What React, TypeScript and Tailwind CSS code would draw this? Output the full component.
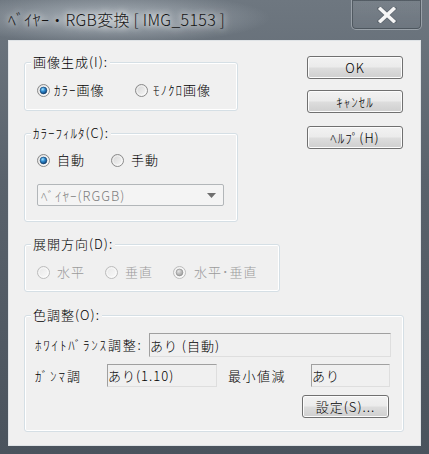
const FONT = "font-['Noto_Sans_CJK_JP','Noto_Sans',sans-serif]";

function Radio({ checked = false, disabled = false }: { checked?: boolean; disabled?: boolean }) {
  return (
    <svg width="13" height="13" viewBox="0 0 13 13" className="shrink-0">
      <defs>
        <linearGradient id="rbFill" x1="0" y1="0" x2="1" y2="1">
          <stop offset="0" stopColor="#d2d2d2" />
          <stop offset="1" stopColor="#fbfbfb" />
        </linearGradient>
        <linearGradient id="rbFillOff" x1="0" y1="0" x2="1" y2="1">
          <stop offset="0" stopColor="#e6e6e6" />
          <stop offset="1" stopColor="#fbfbfb" />
        </linearGradient>
        <radialGradient id="rbDot" cx="0.38" cy="0.32" r="0.7">
          <stop offset="0" stopColor="#a6e4ff" />
          <stop offset="0.45" stopColor="#2f8bd0" />
          <stop offset="1" stopColor="#0d3e74" />
        </radialGradient>
        <radialGradient id="rbDotOff" cx="0.38" cy="0.32" r="0.7">
          <stop offset="0" stopColor="#e4e4e4" />
          <stop offset="1" stopColor="#9c9c9c" />
        </radialGradient>
      </defs>
      <circle
        cx="6.5"
        cy="6.5"
        r="6"
        fill={disabled ? 'url(#rbFillOff)' : 'url(#rbFill)'}
        stroke={disabled ? '#bcbcbc' : '#8a8a8a'}
      />
      <circle cx="6.5" cy="6.5" r="4.6" fill="none" stroke="#ffffff" strokeOpacity="0.6" />
      {checked && (
        <circle
          cx="6.5"
          cy="6.5"
          r="3.4"
          fill={disabled ? 'url(#rbDotOff)' : 'url(#rbDot)'}
          stroke={disabled ? '#8c8c8c' : '#163f6c'}
          strokeWidth="0.6"
        />
      )}
    </svg>
  );
}

function Option({
  label,
  checked,
  disabled,
  width,
  gap,
}: {
  label: string;
  checked?: boolean;
  disabled?: boolean;
  width: string;
  gap: string;
}) {
  return (
    <div className={`flex h-[16px] shrink-0 items-center whitespace-nowrap ${width} ${gap}`}>
      <Radio checked={checked} disabled={disabled} />
      <span className={disabled ? 'text-[#9b9b9b]' : 'text-black'}>{label}</span>
    </div>
  );
}

function Group({
  label,
  className,
  children,
}: {
  label: string;
  className: string;
  children: React.ReactNode;
}) {
  return (
    <div
      className={`relative rounded-[3px] border border-[#d5dfe5] shadow-[inset_0_0_0_1px_#ffffff] ${className}`}
    >
      <span className="absolute -top-[9px] left-[6px] whitespace-nowrap bg-[#f0f0f0] px-[2px] leading-[16px]">
        {label}
      </span>
      {children}
    </div>
  );
}

function Button({ label, className }: { label: string; className: string }) {
  return (
    <button
      className={`flex h-[23px] items-center justify-center whitespace-nowrap rounded-[3px] border border-[#707070] bg-[linear-gradient(#f2f2f2_0%,#ebebeb_48%,#dddddd_52%,#cfcfcf_100%)] shadow-[inset_0_0_0_1px_#fcfcfc] leading-none text-black ${className}`}
    >
      {label}
    </button>
  );
}

function Field({ value, className }: { value: string; className: string }) {
  return (
    <div
      className={`flex shrink-0 items-center whitespace-nowrap border border-t-[#a0a0a0] border-l-[#a0a0a0] border-r-[#dedede] border-b-[#dedede] bg-[#f0f0f0] leading-none ${className}`}
    >
      {value}
    </div>
  );
}

export default function App() {
  return (
    <div
      className={`flex h-[454px] w-[429px] flex-col overflow-hidden bg-[linear-gradient(180deg,#6e7780_0%,#59626c_40%,#4a535d_100%)] text-[13px] font-light tracking-[1px] ${FONT}`}
    >
      {/* title bar */}
      <div className="relative flex h-[40px] shrink-0 items-start bg-[radial-gradient(ellipse_160px_26px_at_110px_18px,rgba(190,198,205,0.75),rgba(190,198,205,0)_100%)] pl-[8px]">
        <span className="mt-[9px] whitespace-nowrap text-[16px] leading-[20px] tracking-[0.3px] text-[#141414] [text-shadow:0_0_6px_#ffffff,0_0_10px_#ffffff]">
          ﾍﾞｲﾔｰ・RGB変換 [ IMG_5153 ]
        </span>
        <div className="ml-auto mr-[7px] flex h-[30px] w-[71px] items-center justify-center rounded-b-[5px] border border-t-0 border-[#aab1b8]/70 bg-[linear-gradient(180deg,rgba(255,255,255,0.08),rgba(255,255,255,0.02))] shadow-[inset_0_0_0_1px_rgba(40,48,56,0.45)]">
          <svg width="20" height="16" viewBox="0 0 20 16">
            <path
              d="M3 1.5 L17 14.5 M17 1.5 L3 14.5"
              stroke="#4b535b"
              strokeWidth="5"
              strokeLinecap="square"
              opacity="0.5"
            />
            <path
              d="M3.5 2 L16.5 14 M16.5 2 L3.5 14"
              stroke="#f6f6f6"
              strokeWidth="3.6"
              strokeLinecap="square"
            />
          </svg>
        </div>
      </div>

      {/* client area */}
      <div className="mx-[8px] h-[406px] shrink-0 border border-[#dfe3e6] bg-[#f0f0f0] pl-[15px] pt-[14px] text-black">
        <div className="flex">
          <div className="w-[214px] shrink-0">
            <Group label="画像生成(I):" className="mt-[7px] h-[49px] pl-[12px] pt-[19px]">
              <div className="flex">
                <Option label="ｶﾗｰ画像" checked width="w-[98px]" gap="gap-[4px]" />
                <Option label="ﾓﾉｸﾛ画像" width="w-[90px]" gap="gap-[5px]" />
              </div>
            </Group>
            <Group label="ｶﾗｰﾌｨﾙﾀ(C):" className="mt-[22px] h-[89px] pl-[12px] pt-[18px]">
              <div className="flex">
                <Option label="自動" checked width="w-[74px]" gap="gap-[7px]" />
                <Option label="手動" width="w-[60px]" gap="gap-[7px]" />
              </div>
              <div className="mt-[16px] flex h-[22px] w-[187px] items-center justify-between rounded-[2px] border border-[#b2b6b9] bg-[#f4f4f4] pl-[3px] pr-[7px] leading-none text-[#7e7e7e]">
                <span className="whitespace-nowrap">ﾍﾞｲﾔｰ(RGGB)</span>
                <svg width="9" height="5" viewBox="0 0 9 5">
                  <path d="M0 0 H9 L4.5 5 Z" fill="#6f6f6f" />
                </svg>
              </div>
            </Group>
          </div>
          <div className="ml-[69px] flex w-[96px] flex-col">
            <Button label="OK" className="mt-[1px] w-[96px]" />
            <Button label="ｷｬﾝｾﾙ" className="mt-[11px] w-[96px]" />
            <Button label="ﾍﾙﾌﾟ(H)" className="mt-[13px] w-[96px]" />
          </div>
        </div>

        <Group label="展開方向(D):" className="mt-[22px] h-[48px] w-[256px] pl-[12px] pt-[19px]">
          <div className="flex">
            <Option label="水平" disabled width="w-[68px]" gap="gap-[7px]" />
            <Option label="垂直" disabled width="w-[68px]" gap="gap-[7px]" />
            <Option label="水平･垂直" checked disabled width="w-[90px]" gap="gap-[8px]" />
          </div>
        </Group>

        <Group label="色調整(O):" className="mt-[23px] h-[117px] w-[380px] pl-[10px] pr-[14px] pt-[17px]">
          <div className="flex h-[24px] items-center">
            <span className="w-[114px] shrink-0 whitespace-nowrap tracking-[1.8px]">ﾎﾜｲﾄﾊﾞﾗﾝｽ調整:</span>
            <Field value="あり (自動)" className="h-[24px] w-[242px]" />
          </div>
          <div className="mt-[7px] flex h-[23px] items-center">
            <span className="w-[72px] shrink-0 whitespace-nowrap tracking-[2px]">ｶﾞﾝﾏ調</span>
            <Field value="あり(1.10)" className="h-[23px] w-[110px]" />
            <span className="ml-[11px] w-[83px] shrink-0 whitespace-nowrap tracking-[1.5px]">最小値減</span>
            <Field value="あり" className="h-[23px] w-[79px]" />
          </div>
          <div className="mt-[8px] flex justify-end">
            <Button label="設定(S)..." className="w-[87px]" />
          </div>
        </Group>
      </div>
    </div>
  );
}
